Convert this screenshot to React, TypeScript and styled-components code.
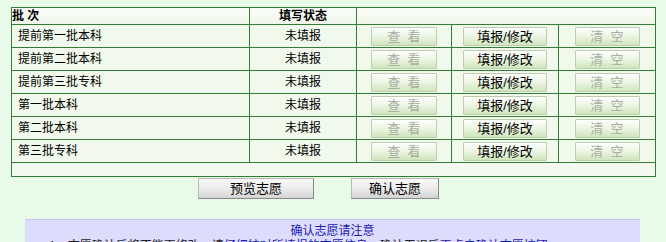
import React from "react";
import styled, { createGlobalStyle } from "styled-components";

const Global = createGlobalStyle`
  html, body { margin: 0; padding: 0; }
  body {
    background: #e8fae8;
    font-family: "Liberation Sans", "Noto Sans CJK SC", sans-serif;
    font-size: 12px;
    color: #000;
    overflow: hidden;
  }
`;

const Page = styled.div`
  padding: 7px 11px 0 11px;
  height: 242px;
  box-sizing: border-box;
`;

const Table = styled.table`
  width: 644px;
  border-collapse: collapse;
  table-layout: fixed;
  background: #f1f8ec;
  border: 1px solid #357a35;
`;

const HeadCell = styled.th<{ $align?: string }>`
  height: 16px;
  padding: 0 0 0 0;
  font-weight: bold;
  font-size: 12px;
  line-height: 16px;
  text-align: ${(p) => p.$align || "left"};
  border: 1px solid #357a35;
  background: linear-gradient(#fbfdf9, #eef6e8);
`;

const Cell = styled.td<{ $align?: string }>`
  height: 22px;
  padding: 0;
  font-size: 12px;
  line-height: 22px;
  text-align: ${(p) => p.$align || "center"};
  border: 1px solid #357a35;
  white-space: nowrap;
`;

const NameCell = styled(Cell)`
  padding-left: 6px;
`;

const EmptyCell = styled.td`
  height: 13px;
  padding: 0;
  border: 1px solid #357a35;
  background: #f3f9ef;
`;

const RowButton = styled.button<{ $w: number; $disabled?: boolean }>`
  display: block;
  margin: 0 auto;
  width: ${(p) => p.$w}px;
  height: 19px;
  padding: 0;
  font-family: inherit;
  font-size: 13px;
  line-height: 17px;
  color: ${(p) => (p.$disabled ? "#a8aea2" : "#000")};
  border: 1px solid #b9cfad;
  border-radius: 1px;
  background: linear-gradient(#fdfefb 0%, #eef6e6 45%, #d0e6bd 100%);
  box-shadow: inset 0 1px 0 #ffffff;
  cursor: default;
`;

const ButtonBar = styled.div`
  display: flex;
  gap: 37px;
  padding-left: 187px;
  margin-top: 1px;
`;

const BigButton = styled.button<{ $w: number }>`
  width: ${(p) => p.$w}px;
  height: 21px;
  padding: 0;
  font-family: inherit;
  font-size: 13px;
  line-height: 19px;
  color: #000;
  border: 1px solid #8a8a8a;
  border-top-color: #b8b8b8;
  border-left-color: #b8b8b8;
  background: linear-gradient(#fafafa, #e8e8e8 60%, #d4d4d4);
`;

const Notice = styled.div`
  margin: 20px 15px 0 14px;
  background: #dedcfc;
  border-top: 1px solid #c8c6f0;
  padding-top: 3px;
`;

const NoticeTitle = styled.div`
  text-align: center;
  color: #1a1ab8;
  font-size: 12px;
  line-height: 16px;
`;

const NoticeText = styled.div`
  padding-left: 24px;
  font-size: 12px;
  line-height: 14px;
  color: #222;
  white-space: nowrap;
`;

const Blue = styled.span`
  color: #1a1ab8;
`;

const rows = [
  "提前第一批本科",
  "提前第二批本科",
  "提前第三批专科",
  "第一批本科",
  "第二批本科",
  "第三批专科",
];

export default function App() {
  return (
    <Page>
      <Global />
      <Table>
        <colgroup>
          <col style={{ width: 238 }} />
          <col style={{ width: 107 }} />
          <col style={{ width: 95 }} />
          <col style={{ width: 107 }} />
          <col style={{ width: 97 }} />
        </colgroup>
        <thead>
          <tr>
            <HeadCell>批 次</HeadCell>
            <HeadCell $align="center">填写状态</HeadCell>
            <HeadCell colSpan={3} />
          </tr>
        </thead>
        <tbody>
          {rows.map((r) => (
            <tr key={r}>
              <NameCell $align="left">{r}</NameCell>
              <Cell>未填报</Cell>
              <Cell>
                <RowButton $w={66} $disabled>查{"\u00a0\u00a0"}看</RowButton>
              </Cell>
              <Cell>
                <RowButton $w={84}>填报/修改</RowButton>
              </Cell>
              <Cell>
                <RowButton $w={65} $disabled>清{"\u00a0\u00a0"}空</RowButton>
              </Cell>
            </tr>
          ))}
          <tr>
            <EmptyCell colSpan={5} />
          </tr>
        </tbody>
      </Table>
      <ButtonBar>
        <BigButton $w={116}>预览志愿</BigButton>
        <BigButton $w={88}>确认志愿</BigButton>
      </ButtonBar>
      <Notice>
        <NoticeTitle>确认志愿请注意</NoticeTitle>
        <NoticeText>
          1、志愿确认后将不能再修改，请<Blue>仔细核对所填报的志愿信息</Blue>，确认无误后<Blue>再点击确认志愿按钮</Blue>。
        </NoticeText>
      </Notice>
    </Page>
  );
}
